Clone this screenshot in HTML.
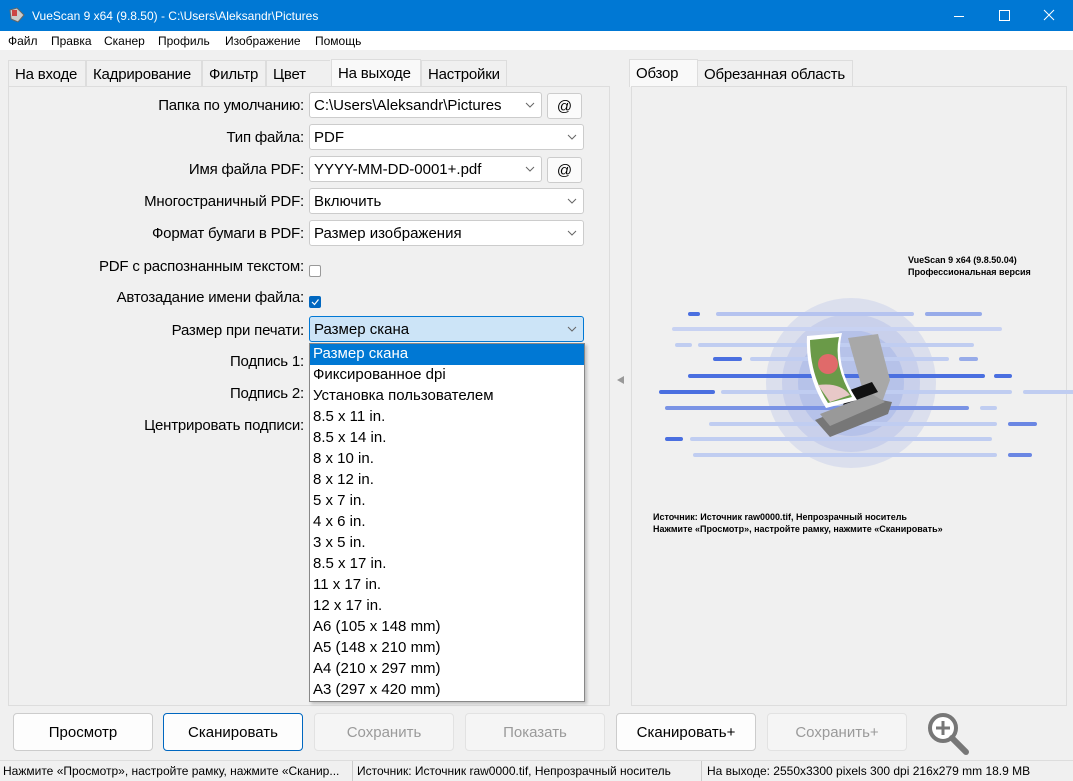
<!DOCTYPE html>
<html><head><meta charset="utf-8"><style>
*{box-sizing:border-box;margin:0;padding:0}
body{width:1073px;height:780px;overflow:hidden;background:#f0f0f0;font-family:"Liberation Sans","DejaVu Sans",sans-serif;color:#000;position:relative}
.a{position:absolute}
.title{left:0;top:0;width:1073px;height:31px;background:#0078d4;color:#fff;font-size:12px}
.menu{left:0;top:31px;width:1073px;height:19px;background:#fff;font-size:12px}
.menu span{position:absolute;top:3px}
.tab{position:absolute;height:27px;border:1px solid #ddd;border-bottom:none;background:#f0f0f0;font-size:15px;padding:5px 0 0 6px;white-space:nowrap;overflow:hidden;letter-spacing:-.2px}
.tab.sel{background:#f9f9f9;top:59px!important;height:28px}
.panel{border:1px solid #ddd;background:#f0f0f0}
.lbl{position:absolute;right:769px;font-size:15px;white-space:nowrap;letter-spacing:-.2px}
.cb{position:absolute;left:309px;width:275px;height:26px;background:#fff;border:1px solid #ccc;border-radius:3px;font-size:15px;padding:4px 4px}
.cb svg{position:absolute;right:6px;top:9px}
.at{position:absolute;left:547px;width:35px;height:26px;background:#fbfbfb;border:1px solid #ccc;border-radius:3px;font-size:15px;text-align:center;padding-top:4px}
.chk{position:absolute;left:309px;width:12px;height:12px;border:1px solid #999;border-radius:2px;background:#fff}
.list{left:309px;top:343px;width:276px;height:359px;background:#fff;border:1px solid #888;font-size:15px;box-shadow:2px 2px 3px rgba(0,0,0,.2)}
.list div{height:21px;padding:1px 3px}
.btn{position:absolute;top:713px;height:38px;width:140px;border:1px solid #ccc;border-radius:4px;background:#fdfdfd;font-size:15px;text-align:center;padding-top:10px}
.dis{color:#9a9a9a;background:#f5f5f5;border-color:#e2e2e2}
.status{left:0;top:760px;width:1073px;height:20px;font-size:12px;border-top:1px solid #ddd}
.status span{position:absolute;top:3px}
.sep{position:absolute;top:0;width:1px;height:20px;background:#ccc}
.sm{font-size:9px;font-weight:bold;line-height:12px}
</style></head><body>
<div class="a title">
<svg class="a" style="left:8px;top:7px" width="18" height="16"><path d="M2 3 L9 1 L16 8 L10 15 L3 12Z" fill="#ccc" stroke="#666"/><rect x="4" y="3" width="5" height="6" fill="#c44"/></svg>
<span class="a" style="left:32px;top:9px">VueScan 9 x64 (9.8.50) - C:\Users\Aleksandr\Pictures</span>
<svg class="a" style="left:950px;top:8px" width="110" height="16" stroke="#fff" fill="none" stroke-width="1"><path d="M4 8.5H14"/><rect x="49.5" y="2.5" width="10" height="10"/><path d="M94 2L104 12M104 2L94 12"/></svg>
</div>
<div class="a menu"><span style="left:8px">Файл</span><span style="left:51px">Правка</span><span style="left:104px">Сканер</span><span style="left:158px">Профиль</span><span style="left:225px">Изображение</span><span style="left:315px">Помощь</span></div>

<div class="tab" style="left:8px;top:60px;width:78px">На входе</div>
<div class="tab" style="left:86px;top:60px;width:116px">Кадрирование</div>
<div class="tab" style="left:202px;top:60px;width:64px">Фильтр</div>
<div class="tab" style="left:266px;top:60px;width:64px;border-right:none">Цвет</div>
<div class="tab sel" style="left:331px;width:90px">На выходе</div>
<div class="tab" style="left:421px;top:60px;width:86px">Настройки</div>
<div class="a panel" style="left:8px;top:86px;width:602px;height:620px"></div>

<div class="tab sel" style="left:629px;width:69px">Обзор</div>
<div class="tab" style="left:697px;top:60px;width:156px">Обрезанная область</div>
<div class="a panel" style="left:631px;top:86px;width:436px;height:620px"></div>

<div class="lbl" style="top:97px">Папка по умолчанию:</div>
<div class="cb" style="top:92px;width:233px">C:\Users\Aleksandr\Pictures<svg width="10" height="6"><path d="M1 1L5 5L9 1" stroke="#666" fill="none"/></svg></div><div class="at" style="top:93px">@</div>
<div class="lbl" style="top:129px">Тип файла:</div>
<div class="cb" style="top:124px">PDF<svg width="10" height="6"><path d="M1 1L5 5L9 1" stroke="#666" fill="none"/></svg></div>
<div class="lbl" style="top:161px">Имя файла PDF:</div>
<div class="cb" style="top:156px;width:233px">YYYY-MM-DD-0001+.pdf<svg width="10" height="6"><path d="M1 1L5 5L9 1" stroke="#666" fill="none"/></svg></div><div class="at" style="top:157px">@</div>
<div class="lbl" style="top:193px">Многостраничный PDF:</div>
<div class="cb" style="top:188px">Включить<svg width="10" height="6"><path d="M1 1L5 5L9 1" stroke="#666" fill="none"/></svg></div>
<div class="lbl" style="top:225px">Формат бумаги в PDF:</div>
<div class="cb" style="top:220px">Размер изображения<svg width="10" height="6"><path d="M1 1L5 5L9 1" stroke="#666" fill="none"/></svg></div>
<div class="lbl" style="top:258px">PDF с распознанным текстом:</div>
<div class="chk" style="top:265px"></div>
<div class="lbl" style="top:289px">Автозадание имени файла:</div>
<div class="chk" style="top:296px;background:#0067c0;border-color:#0067c0"><svg width="10" height="10" style="position:absolute;left:0;top:0"><path d="M2 5L4.5 7.5L8.5 2.5" stroke="#fff" fill="none" stroke-width="1.2"/></svg></div>
<div class="lbl" style="top:322px">Размер при печати:</div>
<div class="cb" style="top:316px;background:#cce4f7;border-color:#0078d4">Размер скана<svg width="10" height="6"><path d="M1 1L5 5L9 1" stroke="#666" fill="none"/></svg></div>
<div class="lbl" style="top:353px">Подпись 1:</div>
<div class="lbl" style="top:385px">Подпись 2:</div>
<div class="lbl" style="top:417px">Центрировать подписи:</div>

<div class="a list">
<div style="background:#0078d4;color:#fff">Размер скана</div><div>Фиксированное dpi</div><div>Установка пользователем</div><div>8.5 x 11 in.</div><div>8.5 x 14 in.</div><div>8 x 10 in.</div><div>8 x 12 in.</div><div>5 x 7 in.</div><div>4 x 6 in.</div><div>3 x 5 in.</div><div>8.5 x 17 in.</div><div>11 x 17 in.</div><div>12 x 17 in.</div><div>A6 (105 x 148 mm)</div><div>A5 (148 x 210 mm)</div><div>A4 (210 x 297 mm)</div><div>A3 (297 x 420 mm)</div>
</div>
<svg class="a" style="left:615px;top:375px" width="10" height="10"><path d="M9 1L2 5L9 9Z" fill="#999"/></svg>

<div class="a sm" style="left:908px;top:254px">VueScan 9 x64 (9.8.50.04)<br>Профессиональная версия</div>
<svg class="a" style="left:640px;top:290px" width="433" height="190">
<circle cx="211" cy="93" r="85" fill="#4a6fe0" opacity=".12"/><circle cx="211" cy="93" r="69" fill="#4a6fe0" opacity=".12"/><circle cx="211" cy="93" r="53" fill="#4a6fe0" opacity=".14"/>
<g stroke-linecap="round" stroke-width="4">
<path d="M78 24H272" stroke="#b5c3ef"/><path d="M50 24H58" stroke="#4a6fe0"/><path d="M287 24H340" stroke="#97abe9"/>
<path d="M34 39H360" stroke="#c8d2f2"/>
<path d="M37 55H50M60 55H332" stroke="#c0cdf1"/>
<path d="M112 69H307" stroke="#c0cdf1"/><path d="M321 69H336" stroke="#97abe9"/><path d="M75 69H100" stroke="#4a6fe0"/>
<path d="M50 86H343M356 86H370" stroke="#4a6fe0"/>
<path d="M83 102H370M385 102H433" stroke="#c0cdf1"/><path d="M21 102H73" stroke="#4a6fe0"/>
<path d="M342 118H355" stroke="#c0cdf1"/><path d="M27 118H327" stroke="#7a93e5"/>
<path d="M71 134H355" stroke="#c0cdf1"/><path d="M370 134H395" stroke="#6a86e3"/>
<path d="M52 149H350" stroke="#c0cdf1"/><path d="M27 149H41" stroke="#4a6fe0"/>
<path d="M55 165H355" stroke="#c0cdf1"/><path d="M370 165H390" stroke="#6a86e3"/>
</g>
<path d="M208 48L238 44L250 90L240 118L225 108Z" fill="#a8a8a8"/>
<path d="M175 130L230 108L252 112L248 124L190 147Z" fill="#777"/>
<path d="M180 124L232 104L245 112L190 136Z" fill="#999"/>
<path d="M203 115L238 102L232 92L210 100Z" fill="#111"/>
<path d="M167 46L202 43Q194 75 217 110L186 118Q165 85 167 46Z" fill="#fff"/><path d="M170 50L199 47Q193 75 212 107L188 113Q170 85 170 50Z" fill="#6a9a48"/><circle cx="188" cy="74" r="10" fill="#e06a6a"/><path d="M178 95Q200 92 210 105L190 112Z" fill="#e8c8c8"/>
</svg>
<div class="a sm" style="left:653px;top:511px">Источник: Источник raw0000.tif, Непрозрачный носитель<br>Нажмите «Просмотр», настройте рамку, нажмите «Сканировать»</div>

<div class="btn" style="left:13px">Просмотр</div>
<div class="btn" style="left:163px;border-color:#0067c0">Сканировать</div>
<div class="btn dis" style="left:314px">Сохранить</div>
<div class="btn dis" style="left:465px">Показать</div>
<div class="btn" style="left:616px">Сканировать+</div>
<div class="btn dis" style="left:767px">Сохранить+</div>
<svg class="a" style="left:925px;top:710px" width="50" height="45"><circle cx="18" cy="18" r="13" fill="#fff" stroke="#777" stroke-width="4"/><path d="M18 11V25M11 18H25" stroke="#777" stroke-width="3"/><path d="M27 28L41 42" stroke="#777" stroke-width="6" stroke-linecap="round"/></svg>

<div class="a status"><span style="left:3px">Нажмите «Просмотр», настройте рамку, нажмите «Сканир...</span><div class="sep" style="left:352px"></div><span style="left:357px">Источник: Источник raw0000.tif, Непрозрачный носитель</span><div class="sep" style="left:701px"></div><span style="left:707px">На выходе: 2550x3300 pixels 300 dpi 216x279 mm 18.9 MB</span></div>
</body></html>
